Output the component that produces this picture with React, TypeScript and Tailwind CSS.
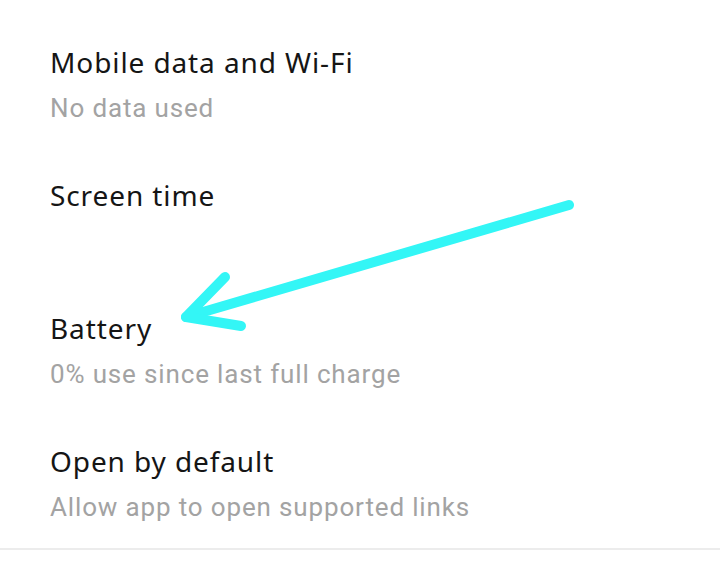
const rows = [
  { title: 'Mobile data and Wi-Fi', sub: 'No data used' },
  { title: 'Screen time', sub: '' },
  { title: 'Battery', sub: '0% use since last full charge' },
  { title: 'Open by default', sub: 'Allow app to open supported links' },
]

export default function App() {
  return (
    <div className="relative w-[720px] h-[580px] bg-white overflow-hidden" style={{ fontFamily: 'Roboto, "Noto Sans", sans-serif' }}>
      <div className="pt-[44px]">
        {rows.map(r => (
          <div key={r.title} className="h-[133px] pl-[50px]">
            <div className="text-[28px] leading-[36px] tracking-[0.9px] text-[#151515] font-['Noto_Sans',sans-serif]">{r.title}</div>
            {r.sub && (
              <div className="mt-[12px] text-[26px] leading-[32px] tracking-[0.85px] text-[#a3a3a3]">{r.sub}</div>
            )}
          </div>
        ))}
      </div>
      <div className="absolute left-0 right-0 top-[548px] h-[2px] bg-[#ececec]" />

      {/* annotation arrow */}
      <svg className="absolute inset-0 pointer-events-none" width="720" height="580">
        <g stroke="#33f6f6" strokeWidth="10" strokeLinecap="round" strokeLinejoin="round" fill="none">
          <path d="M569 205 L186 317" />
          <path d="M225 277 L186 317 L241 326" />
        </g>
      </svg>
    </div>
  )
}
